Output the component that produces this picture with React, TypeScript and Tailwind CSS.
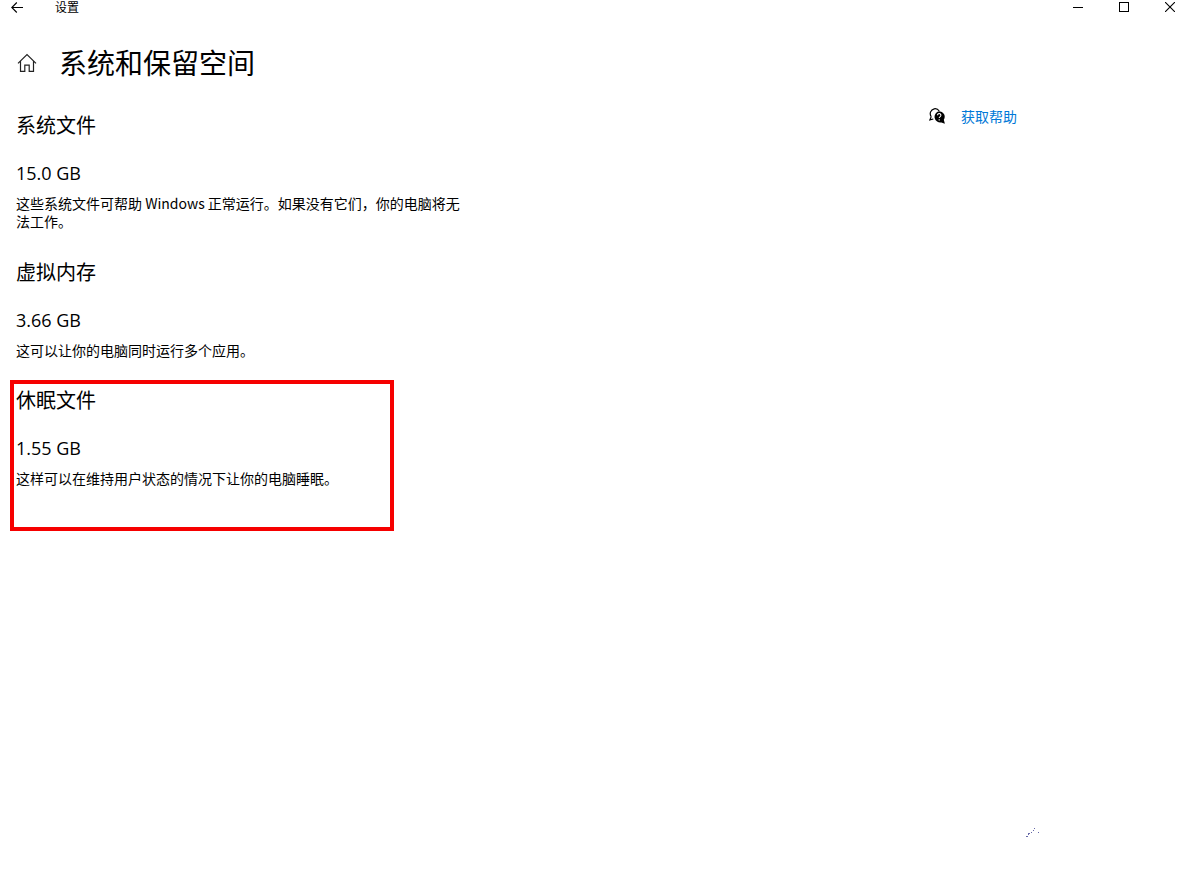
import type { ReactNode } from 'react'

type StorageItem = { title: string; size: string; description: string; highlighted?: boolean }

const items: StorageItem[] = [
  {
    title: '系统文件',
    size: '15.0 GB',
    description: '这些系统文件可帮助 Windows 正常运行。如果没有它们，你的电脑将无法工作。',
  },
  { title: '虚拟内存', size: '3.66 GB', description: '这可以让你的电脑同时运行多个应用。' },
  {
    title: '休眠文件',
    size: '1.55 GB',
    description: '这样可以在维持用户状态的情况下让你的电脑睡眠。',
    highlighted: true,
  },
]

function CaptionButton({ label, children }: { label: string; children: ReactNode }) {
  return (
    <button type="button" aria-label={label} className="flex h-[14px] w-[46px] items-center justify-center">
      <svg width="10" height="10" viewBox="0 0 10 10" fill="none" stroke="#000" shapeRendering="crispEdges">
        {children}
      </svg>
    </button>
  )
}

function TitleBar() {
  return (
    <header className="flex h-[14px] items-center justify-between">
      <div className="flex items-center">
        <button type="button" aria-label="返回" className="flex h-[14px] w-[34px] items-center justify-center">
          <svg width="12" height="11" viewBox="0 0 12 11" fill="none" stroke="#000" strokeWidth="1.1">
            <path d="M12 5.5H.8M5.8.5l-5 5 5 5" />
          </svg>
        </button>
        <span className="ml-[21px] text-xs leading-[14px]">设置</span>
      </div>
      <div className="-mr-[7px] flex">
        <CaptionButton label="最小化">
          <path d="M0 5.5h10" />
        </CaptionButton>
        <CaptionButton label="最大化">
          <path d="M.5.5h9v9h-9z" />
        </CaptionButton>
        <CaptionButton label="关闭">
          <path d="M0 0l10 10M10 0L0 10" shapeRendering="auto" strokeWidth="1.1" />
        </CaptionButton>
      </div>
    </header>
  )
}

function StorageSection({ title, size, description, highlighted }: StorageItem) {
  return (
    <section
      className={
        highlighted
          ? 'mt-[21px] w-[384px] border-4 border-[#f60000] pt-[2px] pb-10 pl-[2px]'
          : 'mt-7 w-[460px] pl-[6px] first:mt-0'
      }
    >
      <h2 className="text-xl leading-7">{title}</h2>
      <p className="mt-5 font-['Open_Sans','Noto_Sans_CJK_SC',sans-serif] text-lg leading-7">{size}</p>
      <p className="mt-[7px] text-sm leading-[18px]">{description}</p>
    </section>
  )
}

export default function App() {
  return (
    <div className="flex min-h-screen flex-col bg-white font-['Noto_Sans_CJK_SC',sans-serif] text-black">
      <TitleBar />
      <div className="mt-7 flex items-center pl-[17px]">
        <a href="#home" aria-label="主页" className="pt-[2px]">
          <svg width="20" height="20" viewBox="0 0 20 20" fill="none" stroke="#222" strokeWidth="1.2">
            <path d="M1 10.4L10 1.5l9 8.9M3.5 8.2v10.1h4.3v-6.1h4.4v6.1h4.3V8.2" />
          </svg>
        </a>
        <h1 className="ml-[22px] text-[28px] leading-10">系统和保留空间</h1>
      </div>
      <main className="mt-[29px] flex justify-between pl-[10px]">
        <div>
          {items.map((item) => (
            <StorageSection key={item.title} {...item} />
          ))}
        </div>
        <aside className="w-[257px] shrink-0">
          <a href="#help" className="-mt-1 flex items-center text-sm leading-[18px] text-[#0078d7]">
            <svg width="16" height="16" viewBox="0 0 16 16" aria-hidden="true">
              <path
                d="M2.2 8.6A5 5 0 0 1 5.2.8a5 5 0 0 1 5 2.2M2.2 8.6L.9 11.9l3.4-.9"
                fill="none"
                stroke="#000"
                strokeWidth="1.2"
              />
              <path d="M10.1 3.2a5.6 5.6 0 0 1 4.7 8.6l1.1 4-3.5-1.4a5.7 5.7 0 1 1-2.3-11.2z" fill="#000" />
              <path d="M8.5 7.2a1.7 1.7 0 1 1 2.7 1.4c-.7.5-1 .7-1 1.5M10.2 11.2v1.2" fill="none" stroke="#fff" strokeWidth="1.1" />
            </svg>
            <span className="ml-4">获取帮助</span>
          </a>
        </aside>
      </main>
      <footer className="mt-auto flex justify-end pr-[147px] pb-11">
        <svg width="13" height="9" viewBox="0 0 13 9" fill="#6668a8" shapeRendering="crispEdges" aria-hidden="true">
          <path d="M0 8h2v1H0zM2 5h2v1H3v1H2zM5 4h1v1H5zM7 2h1v1H7zM8 0h1v1H8zM12 4h1v1h-1z" />
        </svg>
      </footer>
    </div>
  )
}
